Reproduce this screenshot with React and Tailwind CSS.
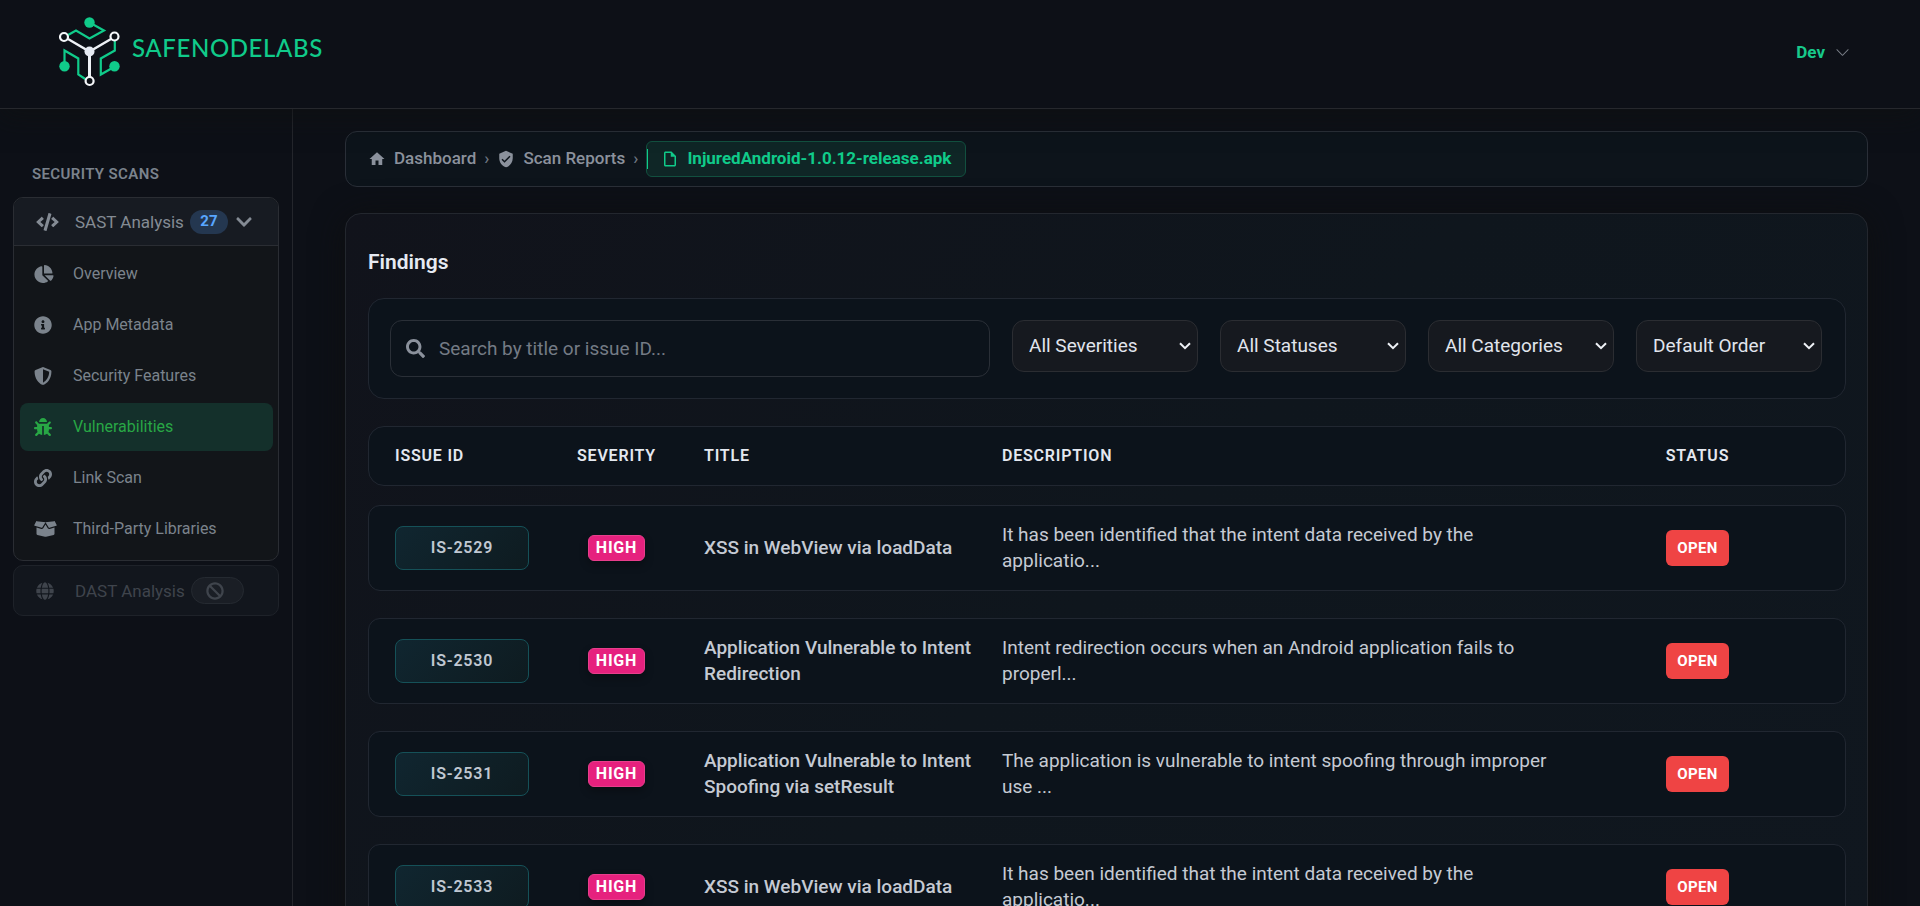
import React from "react";
import {
  FaBan,
  FaBoxOpen,
  FaBug,
  FaChartPie,
  FaChevronDown,
  FaCode,
  FaGlobe,
  FaInfoCircle,
  FaLink,
  FaSearch,
  FaShieldAlt,
} from "react-icons/fa";
import { BsChevronDown } from "react-icons/bs";
import { MdHome, MdOutlineInsertDriveFile, MdVerifiedUser } from "react-icons/md";

const NAV_ITEMS = [
  { label: "Overview", Icon: FaChartPie, size: "h-[18px] w-5" },
  { label: "App Metadata", Icon: FaInfoCircle, size: "size-[18px]" },
  { label: "Security Features", Icon: FaShieldAlt, size: "size-[18px]" },
  { label: "Vulnerabilities", Icon: FaBug, size: "size-[18px]", active: true },
  { label: "Link Scan", Icon: FaLink, size: "size-[18px]" },
  { label: "Third-Party Libraries", Icon: FaBoxOpen, size: "h-[18px] w-[23px]" },
];

const FILTERS = [
  { label: "Severity", options: ["All Severities", "High", "Medium", "Low"] },
  { label: "Status", options: ["All Statuses", "Open", "Closed"] },
  { label: "Category", options: ["All Categories"] },
  { label: "Sort order", options: ["Default Order"] },
];

const FINDINGS = [
  {
    id: "IS-2529",
    title: "XSS in WebView via loadData",
    description: "It has been identified that the intent data received by the applicatio...",
  },
  {
    id: "IS-2530",
    title: "Application Vulnerable to Intent Redirection",
    description: "Intent redirection occurs when an Android application fails to properl...",
  },
  {
    id: "IS-2531",
    title: "Application Vulnerable to Intent Spoofing via setResult",
    description: "The application is vulnerable to intent spoofing through improper use ...",
  },
  {
    id: "IS-2533",
    title: "XSS in WebView via loadData",
    description: "It has been identified that the intent data received by the applicatio...",
  },
];

const ROW_GRID =
  "grid grid-cols-[134fr_121fr_271fr_547fr_243fr] items-center gap-x-[27px] border border-[#212731] bg-[#0c131b] px-[26px]";

function Logo() {
  return (
    <a href="#home" className="flex items-center gap-[11px]">
      <svg viewBox="0 0 62 70" className="h-[70px] w-[62px]" fill="none" aria-hidden="true">
        <g stroke="#10cb8a" strokeWidth="2.2">
          <path d="M30.5 5.5 L45 13.5 L30.5 21.5 L17 13.5 L9 18" />
          <path d="M5.5 49 V33.5 L19.3 41.5 V57.5 L27 62.5" />
          <path d="M55.8 24 V33.5 L41.8 41.5 V57.5 L55 50" />
        </g>
        <g fill="#10cb8a">
          <circle cx="30.5" cy="5.5" r="5.2" />
          <circle cx="5.5" cy="49.3" r="5.2" />
          <circle cx="55.5" cy="49.3" r="5.2" />
        </g>
        <g stroke="#eef1f6" strokeWidth="2.4">
          <path d="M9 22 L30.5 34.5 L52 22" />
          <path d="M30.5 34.5 V60" strokeWidth="3" />
        </g>
        <circle cx="30.5" cy="34.5" r="5" fill="#e6eaf2" />
        <g stroke="#f5f7fa" strokeWidth="2.2" fill="#0d1117">
          <circle cx="5" cy="20" r="4" />
          <circle cx="55.5" cy="19.5" r="4" />
          <circle cx="30.6" cy="64" r="4" />
        </g>
      </svg>
      <span className="pb-2 font-['Lato',sans-serif] text-[24px] font-medium leading-8 tracking-wide text-[#10cb8a]">
        SAFENODELABS
      </span>
    </a>
  );
}

function Header() {
  return (
    <header className="relative z-10 flex h-[109px] items-start justify-between border-b border-[#26282d] bg-[#0d1017] pl-[59px] pr-[70px] pt-[17px] shadow-[0_8px_24px_rgba(15,16,16,0.6)]">
      <Logo />
      <button type="button" className="mt-[22px] flex items-center gap-[10px] text-[#17c98b]">
        <span className="text-[17px] font-bold leading-[26px]">Dev</span>
        <BsChevronDown className="size-[15px] text-[#7a7f88]" aria-hidden="true" />
      </button>
    </header>
  );
}

function Sidebar() {
  return (
    <aside className="w-[293px] shrink-0 border-r border-[#24262c] px-[13px] pt-[54px]">
      <h2 className="pl-[19px] text-[15px] font-semibold leading-[22px] tracking-wide text-[#7b838d]">
        SECURITY SCANS
      </h2>
      <section className="mt-3 overflow-hidden rounded-[10px] border border-[#2a2d33] bg-[#121519]">
        <button
          type="button"
          className="flex h-12 w-full items-center border-b border-[#2a2d33] bg-[#171b22] pl-[22px] text-[#848b94]"
        >
          <span className="w-[39px]">
            <FaCode className="h-[18px] w-[23px]" aria-hidden="true" />
          </span>
          <span className="text-[17px] leading-6">SAST Analysis</span>
          <span className="ml-[6px] flex h-6 w-[38px] items-center justify-center rounded-full bg-[#243750] text-[15px] font-bold text-[#58a6ff]">
            27
          </span>
          <FaChevronDown className="ml-2 h-[18px] w-4" aria-hidden="true" />
        </button>
        <nav className="flex flex-col gap-[3px] pb-[7px] pl-[6px] pr-[5px] pt-1">
          {NAV_ITEMS.map(({ label, Icon, size, active }) => (
            <a
              key={label}
              href="#scan"
              aria-current={active ? "page" : undefined}
              className={
                active
                  ? "flex h-12 items-center rounded-lg bg-[#14302b] pl-[14px] text-[#28a745]"
                  : "flex h-12 items-center rounded-lg pl-[14px] text-[#7b838c]"
              }
            >
              <span className="w-[39px]">
                <Icon className={size} aria-hidden="true" />
              </span>
              <span className="text-base leading-6">{label}</span>
            </a>
          ))}
        </nav>
      </section>
      <button
        type="button"
        disabled
        className="mt-1 flex h-[51px] w-full items-center rounded-[10px] border border-[#1e2229] bg-[#12161d] pl-[22px] text-[#3f444c]"
      >
        <span className="w-[39px]">
          <FaGlobe className="size-[18px]" aria-hidden="true" />
        </span>
        <span className="text-[17px] leading-6">DAST Analysis</span>
        <span className="ml-[6px] flex h-[27px] w-[53px] items-center rounded-full border border-[#252a31] bg-[#1a1e25] pl-[14px]">
          <FaBan className="size-[18px]" aria-hidden="true" />
        </span>
      </button>
    </aside>
  );
}

function Breadcrumb() {
  return (
    <nav
      aria-label="Breadcrumb"
      className="flex h-14 items-center rounded-xl border border-[#2a2f38] bg-[#0d141b] px-[22px] text-[17px] font-medium text-[#8b919c]"
    >
      <a href="#dashboard" className="flex items-center gap-2">
        <MdHome className="size-[18px]" aria-hidden="true" />
        Dashboard
      </a>
      <span className="px-2 text-[#6f7681]">›</span>
      <a href="#reports" className="flex items-center gap-2">
        <MdVerifiedUser className="size-[18px]" aria-hidden="true" />
        Scan Reports
      </a>
      <span className="px-2 text-[#6f7681]">›</span>
      <a
        href="#report"
        aria-current="page"
        className="relative flex h-9 items-center gap-2 rounded-md border border-[#12503f] bg-[#0f2626] px-[14px] font-bold text-[#10cb8a]"
      >
        <span className="absolute inset-y-[7px] left-0 w-px bg-[#10cb8a]" />
        <MdOutlineInsertDriveFile className="size-[18px]" aria-hidden="true" />
        InjuredAndroid-1.0.12-release.apk
      </a>
    </nav>
  );
}

function FilterSelect({ label, options }) {
  return (
    <div className="relative">
      <select
        aria-label={label}
        className="block h-[52px] w-[186px] appearance-none rounded-xl border border-[#2b2d32] bg-[#16191f] pl-4 pr-6 text-[19px] text-[#e1e5ed]"
      >
        {options.map((option) => (
          <option key={option}>{option}</option>
        ))}
      </select>
      <svg
        viewBox="0 0 12 8"
        className="pointer-events-none absolute right-[7px] top-[22px] h-2 w-3"
        fill="none"
        stroke="#eef1f6"
        strokeWidth="2"
        aria-hidden="true"
      >
        <path d="M1 1.2 L6 6.2 L11 1.2" />
      </svg>
    </div>
  );
}

function Filters() {
  return (
    <form className="mt-[22px] flex items-start gap-[22px] rounded-2xl border border-[#212731] bg-[#0c131b] py-[21px] pl-[21px] pr-[23px]">
      <div className="flex h-[57px] flex-1 items-center gap-[14px] rounded-xl border border-[#2a2f37] px-[15px]">
        <FaSearch className="size-[19px] text-[#8b919c]" aria-hidden="true" />
        <input
          type="text"
          aria-label="Search findings"
          placeholder="Search by title or issue ID..."
          className="h-full min-w-0 flex-1 bg-transparent text-[19px] text-[#e6eaf2] outline-none placeholder:text-[#747b85]"
        />
      </div>
      {FILTERS.map((filter) => (
        <FilterSelect key={filter.label} {...filter} />
      ))}
    </form>
  );
}

function FindingsTable() {
  return (
    <table className="mt-[27px] block text-left">
      <thead className="block">
        <tr className={`${ROW_GRID} h-[60px] rounded-2xl text-base tracking-wider text-[#e4e8f0]`}>
          <th className="font-semibold">ISSUE ID</th>
          <th className="text-center font-semibold">SEVERITY</th>
          <th className="font-semibold">TITLE</th>
          <th className="font-semibold">DESCRIPTION</th>
          <th className="text-center font-semibold">STATUS</th>
        </tr>
      </thead>
      <tbody className="mt-[19px] flex flex-col gap-[27px]">
        {FINDINGS.map(({ id, title, description }) => (
          <tr key={id} className={`${ROW_GRID} h-[86px] rounded-xl text-[19px] leading-[26px] text-[#c5cad3]`}>
            <td>
              <button
                type="button"
                className="block h-11 w-full rounded-lg border border-[#155158] bg-linear-135 from-[#102630] to-[#0e1b20] text-base font-semibold tracking-wider text-[#c0c8d2]"
              >
                {id}
              </button>
            </td>
            <td className="flex justify-center">
              <span className="flex h-[26px] items-center rounded-md border border-[#e83e8c] bg-[#e6217e] px-[7px] text-base font-bold tracking-wider text-white shadow-[0_4px_8px_rgba(0,0,0,0.3)]">
                HIGH
              </span>
            </td>
            <td className="font-medium">{title}</td>
            <td>{description}</td>
            <td className="flex justify-center">
              <span className="flex h-9 items-center rounded-md bg-[#ef4444] px-[11px] text-[15px] font-bold tracking-wide text-white">
                OPEN
              </span>
            </td>
          </tr>
        ))}
      </tbody>
    </table>
  );
}

export default function App() {
  return (
    <div className="flex h-screen flex-col overflow-hidden bg-[#0d1017] font-['Roboto',sans-serif]">
      <Header />
      <div className="flex min-h-0 flex-1">
        <Sidebar />
        <main className="min-w-0 flex-1 px-[52px] pt-[22px]">
          <Breadcrumb />
          <section className="mt-[26px] rounded-2xl border border-[#23272e] bg-linear-135 from-[#11131b] via-[#0f161d] to-[#10171f] pb-6 pl-[22px] pr-[21px] pt-[34px] shadow-[0_4px_32px_rgba(14,15,16,1)]">
            <h1 className="text-[21px] font-semibold leading-7 text-[#e6eaf2]">Findings</h1>
            <Filters />
            <FindingsTable />
          </section>
        </main>
      </div>
    </div>
  );
}
